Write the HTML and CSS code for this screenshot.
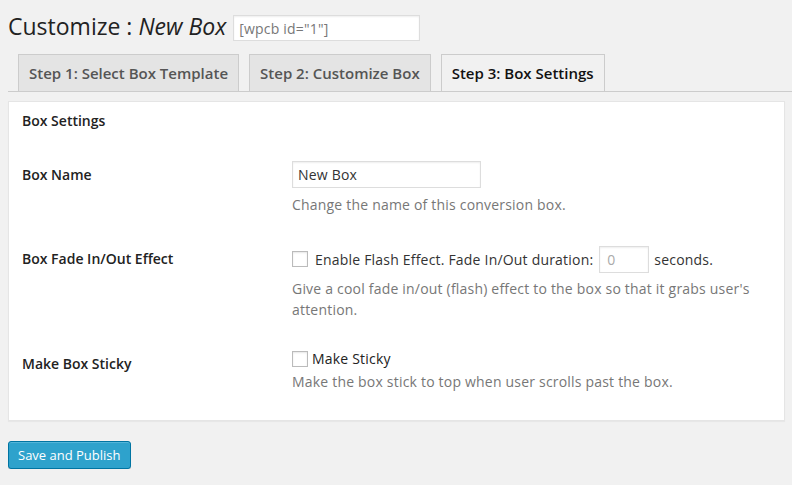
FILE: index.html
```html
<!DOCTYPE html>
<html lang="en">
<head>
<meta charset="utf-8">
<title>Customize : New Box</title>
<link rel="stylesheet" href="styles.css">
</head>
<body>
<div class="wrap">
  <div class="header">
    <h2 class="title">Customize : <em>New Box</em></h2>
    <input class="shortcode" type="text" value='[wpcb id="1"]' readonly>
  </div>
  <nav class="tabs">
    <a class="tab">Step 1: Select Box Template</a>
    <a class="tab">Step 2: Customize Box</a>
    <a class="tab tab-active">Step 3: Box Settings</a>
  </nav>
  <div class="panel">
    <h3 class="panel-title">Box Settings</h3>
    <div class="row">
      <div class="label">Box Name</div>
      <div class="field">
        <input class="text-input" type="text" value="New Box">
        <p class="desc">Change the name of this conversion box.</p>
      </div>
    </div>
    <div class="row">
      <div class="label">Box Fade In/Out Effect</div>
      <div class="field">
        <div class="line line-flash">
          <input class="check" type="checkbox">
          <span class="flash-text">Enable Flash Effect. Fade In/Out duration:</span>
          <input class="num-input" type="text" value="0">
          <span>seconds.</span>
        </div>
        <p class="desc desc-flash">Give a cool fade in/out (flash) effect to the box so that it grabs user's attention.</p>
      </div>
    </div>
    <div class="row">
      <div class="label">Make Box Sticky</div>
      <div class="field">
        <div class="line line-sticky">
          <input class="check" type="checkbox">
          <span class="sticky-text">Make Sticky</span>
        </div>
        <p class="desc desc-sticky">Make the box stick to top when user scrolls past the box.</p>
      </div>
    </div>
  </div>
  <button class="button-primary" type="button">Save and Publish</button>
</div>
</body>
</html>
```

FILE: styles.css
```css
html, body {
  margin: 0;
  padding: 0;
  background: #f1f1f1;
}
body {
  font-family: "Open Sans", "Liberation Sans", sans-serif;
  font-size: 14px;
  color: #333;
}
.wrap {
  padding: 12px 0 0 8px;
}
.header {
  display: flex;
  align-items: flex-start;
  gap: 7px;
}
.title {
  margin: 0;
  font-size: 23px;
  font-weight: 400;
  line-height: 29px;
  color: #222;
}
.title em {
  font-style: italic;
}
.shortcode {
  margin-top: 3px;
  width: 187px;
  height: 26px;
  box-sizing: border-box;
  border: 1px solid #ddd;
  background: #fff;
  box-shadow: inset 0 1px 2px rgba(0,0,0,.07);
  font-family: inherit;
  font-size: 14px;
  letter-spacing: 0.2px;
  color: #777;
  padding: 2px 5px;
  outline: none;
}
.tabs {
  display: flex;
  margin-top: 13px;
  padding-left: 10px;
  border-bottom: 1px solid #ccc;
  gap: 10px;
}
.tab {
  display: block;
  border: 1px solid #ccc;
  border-bottom: none;
  background: #e4e4e4;
  color: #555;
  font-size: 15px;
  font-weight: 600;
  line-height: 24px;
  padding: 6px 10px;
}
.tab-active {
  background: #f1f1f1;
  color: #111;
}
.panel {
  margin: 9px 7px 0 0;
  background: #fff;
  border: 1px solid #e5e5e5;
  box-shadow: 0 1px 1px rgba(0,0,0,.04);
  padding: 9px 12px 13px 13px;
}
.panel-title {
  margin: 0 0 15px;
  font-size: 14px;
  font-weight: 600;
  line-height: 20px;
  color: #222;
}
.row {
  display: grid;
  grid-template-columns: 270px 1fr;
}
.label {
  padding: 20px 0;
  font-weight: 600;
  line-height: 18px;
  color: #222;
}
.field {
  padding: 15px 0;
  letter-spacing: 0.2px;
}
.text-input {
  display: block;
  width: 189px;
  height: 27px;
  box-sizing: border-box;
  border: 1px solid #ddd;
  background: #fff;
  box-shadow: inset 0 1px 2px rgba(0,0,0,.07);
  font-family: inherit;
  font-size: 14px;
  letter-spacing: 0.2px;
  color: #333;
  padding: 2px 5px;
  margin: 0;
  outline: none;
}
.desc {
  margin: 6px 0 0;
  line-height: 21px;
  color: #777;
}
.desc-flash {
  margin-top: 5px;
}
.desc-sticky {
  margin-top: 4px;
}
.line {
  display: flex;
  align-items: center;
}
.line-flash {
  height: 28px;
}
.line-sticky {
  height: 17px;
}
.check {
  appearance: none;
  -webkit-appearance: none;
  width: 16px;
  height: 16px;
  box-sizing: border-box;
  margin: 0;
  border: 1px solid #bbb;
  background: #fff;
  box-shadow: inset 0 1px 2px rgba(0,0,0,.1);
}
.flash-text {
  margin-left: 7px;
}
.sticky-text {
  margin-left: 4px;
  color: #222;
}
.num-input {
  width: 50px;
  height: 27px;
  box-sizing: border-box;
  margin: 0 5px 0 6px;
  border: 1px solid #ddd;
  background: #fff;
  box-shadow: inset 0 1px 2px rgba(0,0,0,.07);
  font-family: inherit;
  font-size: 14px;
  color: #aaa;
  padding: 2px 7px;
  outline: none;
}
.button-primary {
  display: block;
  margin-top: 20px;
  height: 28px;
  padding: 0 9px;
  background: #2ea2cc;
  border: 1px solid #0074a2;
  border-radius: 3px;
  box-shadow: inset 0 1px 0 rgba(120,200,230,.5), 0 1px 0 rgba(0,0,0,.15);
  color: #fff;
  font-family: inherit;
  font-size: 13px;
  line-height: 25px;
}
```
